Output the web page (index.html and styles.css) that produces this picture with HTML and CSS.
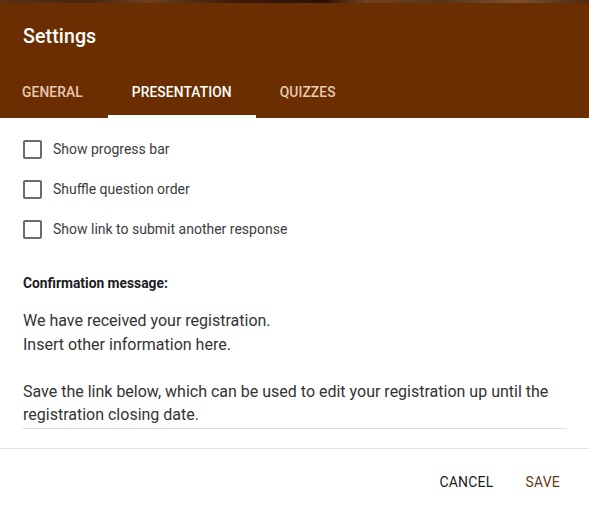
FILE: index.html
```html
<!DOCTYPE html>
<html>
<head>
<meta charset="utf-8">
<link rel="stylesheet" href="styles.css">
</head>
<body>
<div class="dialog">
  <header class="header">
    <div class="strip"></div>
    <h1 class="title">Settings</h1>
    <nav class="tabs">
      <div class="tab first">GENERAL</div>
      <div class="tab active">PRESENTATION</div>
      <div class="tab">QUIZZES</div>
    </nav>
  </header>
  <main class="content">
    <div class="options">
      <label class="option"><span class="box"></span><span>Show progress bar</span></label>
      <label class="option"><span class="box"></span><span>Shuffle question order</span></label>
      <label class="option"><span class="box"></span><span>Show link to submit another response</span></label>
    </div>
    <div class="confirm-label">Confirmation message:</div>
    <div class="message">
      <p>We have received your registration.<br>Insert other information here.</p>
      <p>Save the link below, which can be used to edit your registration up until the registration closing date.</p>
    </div>
  </main>
  <footer class="footer">
    <button class="btn">CANCEL</button>
    <button class="btn save">SAVE</button>
  </footer>
</div>
</body>
</html>
```

FILE: styles.css
```css
* { box-sizing: border-box; }
html, body { margin: 0; padding: 0; background: #fff; }
body { font-family: Roboto, "Noto Sans", Arial, sans-serif; color: #202124; }

.dialog { width: 589px; height: 516px; background: #fff; display: flex; flex-direction: column; }

.header { background: #6a2e00; height: 118px; display: flex; flex-direction: column; flex: none; }
.strip { height: 3px; background: linear-gradient(90deg, #5a3018 0%, #4a2410 15%, #6b4020 25%, #3a1c0c 40%, #2c1006 55%, #6e4222 62%, #5a3418 75%, #7a5030 88%, #4a2812 100%); }
.title { margin: 0; padding: 21px 0 0 23px; height: 64px; font-size: 19.6px; font-weight: 500; color: #fff; letter-spacing: 0.1px; line-height: 26px; }
.tabs { display: flex; height: 51px; }
.tab { padding: 1px 24px 0; display: flex; align-items: center; font-size: 13.8px; font-weight: 500; color: #e8c8b0; letter-spacing: 0.1px; border-bottom: 3px solid transparent; }
.tab.first { padding-left: 22px; padding-right: 25px; }
.tab.active { color: #fff; border-bottom-color: #fff; }

.content { padding: 0 22px 0 23px; flex: 1; }
.options { padding-top: 21px; display: flex; flex-direction: column; gap: 20px; }
.option { display: flex; align-items: center; gap: 11px; font-size: 14px; color: #3c3c3c; height: 20px; }
.box { width: 19px; height: 19px; border: 2px solid #6b6b6b; border-radius: 2px; }
.confirm-label { margin-top: 36px; font-size: 13.8px; font-weight: 700; color: #202124; line-height: 16px; }
.message { margin-top: 18px; font-size: 16px; line-height: 23.5px; color: #333; border-bottom: 1px solid #dcdcdc; padding-bottom: 1px; }
.message p { margin: 0 0 23.5px; }
.message p:last-child { margin-bottom: 0; }

.footer { border-top: 1px solid #e0e0e0; height: 68px; display: flex; justify-content: flex-end; align-items: center; padding: 0 21px 2px 0; gap: 8px; flex: none; }
.btn { background: none; border: none; font-family: inherit; font-size: 14px; font-weight: 400; color: #202124; padding: 8px 8px; letter-spacing: 0.2px; }
.btn.save { color: #6b3a12; margin-left: 8px; }
```
